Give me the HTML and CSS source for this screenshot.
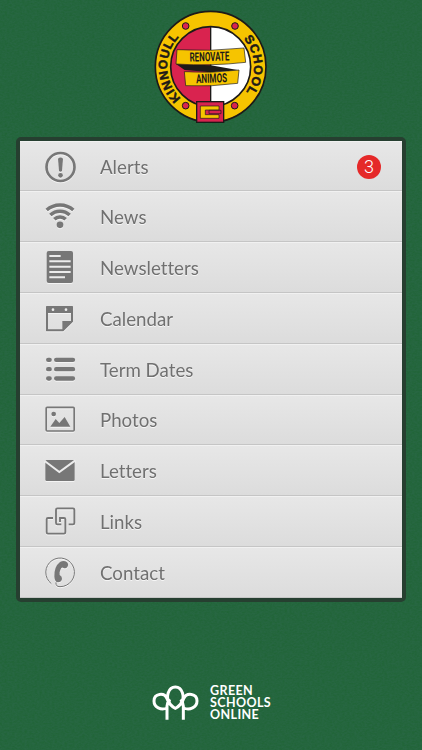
FILE: index.html
```html
<!DOCTYPE html>
<html lang="en">
<head>
  <meta charset="UTF-8" />
  <meta name="viewport" content="width=device-width, initial-scale=1" />
  <title>Kinnoull School</title>
  <link rel="stylesheet" href="styles.css">
</head>
<body>

<svg class="texture" aria-hidden="true">
  <filter id="grain">
    <feTurbulence type="fractalNoise" baseFrequency="0.4 0.6" numOctaves="2" seed="4" />
    <feColorMatrix values="0 0 0 0 0  0 0 0 0 0.1  0 0 0 0 0  0.9 0 0 0 -0.28" />
  </filter>
  <rect width="100%" height="100%" filter="url(#grain)" />
</svg>

<header>
  <svg class="crest" viewBox="0 0 366 366" role="img" aria-label="Kinnoull School">
    <defs>
      <path id="arc-left" d="M 93 280 A 130 130 0 0 1 93 90" />
      <path id="arc-right" d="M 281 101 A 130 130 0 0 1 286 264" />
    </defs>
    <circle cx="182" cy="185" r="166" fill="#f6c400" stroke="#1d1a18" stroke-width="5" />
    <circle cx="182" cy="185" r="120" fill="#fff" />
    <path d="M182 65 A120 120 0 0 0 182 305 Z" fill="#d9234f" />
    <circle cx="182" cy="185" r="120" fill="none" stroke="#1d1a18" stroke-width="5" />
    <path d="M182 65 V305" stroke="#1d1a18" stroke-width="4" />
    <g fill="#d9234f" stroke="#1d1a18" stroke-width="3">
      <circle cx="107" cy="63" r="10" />
      <circle cx="255" cy="63" r="10" />
      <circle cx="107" cy="302" r="10" />
      <circle cx="254" cy="302" r="10" />
    </g>
    <path d="M78 177 L182 181 L267 196 L182 202 L104 195 Z" fill="#1d1a18" />
    <g fill="#f6c400" stroke="#1d1a18" stroke-width="2">
      <path d="M81 134 Q182 140 282 129 L287 172 Q182 184 78 177 Z" />
      <path d="M103 200 Q182 206 267 195 L263 235 Q182 246 107 242 Z" />
    </g>
    <g class="ribbon-text">
      <text x="119" y="168" textLength="119" lengthAdjust="spacingAndGlyphs" transform="rotate(-1.5 180 155)">RENOVATE</text>
      <text x="138" y="233" textLength="93" lengthAdjust="spacingAndGlyphs" transform="rotate(-2 184 220)">ANIMOS</text>
    </g>
    <g class="ring-text">
      <text textLength="204"><textPath href="#arc-left">KINNOULL</textPath></text>
      <text textLength="172"><textPath href="#arc-right">SCHOOL</textPath></text>
    </g>
    <rect x="140" y="290" width="81" height="62" fill="#d9234f" stroke="#1d1a18" stroke-width="4" />
    <path d="M151 303 H207 V315 H166 V329 H207 V340 H151 Z" fill="#f6c400" stroke="#1d1a18" stroke-width="2" />
    <path d="M177 316 H213 V326 H177 Z" fill="#d9234f" stroke="#1d1a18" stroke-width="2" />
  </svg>
</header>

<main>
  <nav class="menu">
    <a class="item" href="#">
      <svg class="icon" viewBox="0 0 108 108">
        <circle class="line" cx="55.5" cy="54" r="42" stroke-width="8" />
        <path d="M48 29 Q55.5 22 63 29 L60 66 Q55.5 71 51 66 Z" />
        <circle cx="55.5" cy="79" r="7" />
      </svg>
      <span>Alerts</span>
      <b class="badge">3</b>
    </a>
    <a class="item" href="#">
      <svg class="icon" viewBox="0 0 108 108">
        <circle cx="54" cy="77.5" r="10" />
        <path class="line" stroke-width="10.5" d="M14 33 A60 60 0 0 1 94 33 M25 48 A42 42 0 0 1 83 48 M37 61 A24 24 0 0 1 71 61" />
      </svg>
      <span>News</span>
    </a>
    <a class="item" href="#">
      <svg class="icon" viewBox="0 0 108 108">
        <rect x="14" y="3" width="79" height="96" rx="6" />
        <path class="cut" d="M22 18 H56 M22 34 H86 M22 50 H86 M22 66 H86 M22 82 H69" />
      </svg>
      <span>Newsletters</span>
    </a>
    <a class="item" href="#">
      <svg class="icon" viewBox="0 0 108 108">
        <path fill-rule="evenodd" d="M14 15 H91 Q93 15 93 17 V62 L64 91 H14 Q12 91 12 89 V17 Q12 15 14 15 Z M18 36 V85 H61 V60 H87 V36 Z" />
        <circle class="hole" cx="33" cy="26" r="4" />
        <circle class="hole" cx="72" cy="26" r="4" />
      </svg>
      <span>Calendar</span>
    </a>
    <a class="item" href="#">
      <svg class="icon" viewBox="0 0 108 108">
        <path class="line round" stroke-width="13" d="M18.5 23.5 H23 M42.5 23.5 H93 M18.5 51.5 H23 M42.5 51.5 H93 M18.5 79.5 H23 M42.5 79.5 H93" />
      </svg>
      <span>Term Dates</span>
    </a>
    <a class="item" href="#">
      <svg class="icon" viewBox="0 0 108 108">
        <rect class="line" x="12.5" y="16" width="84" height="71" rx="3" stroke-width="5" />
        <circle cx="35" cy="36" r="7" />
        <path d="M25 74 L41 51 L52 63 L68 45 L85 74 Z" />
      </svg>
      <span>Photos</span>
    </a>
    <a class="item" href="#">
      <svg class="icon" viewBox="0 0 108 108">
        <rect x="10" y="21" width="88" height="63" rx="4" />
        <path class="cut" d="M8 24 L52 57 L100 22" />
      </svg>
      <span>Letters</span>
    </a>
    <a class="item" href="#">
      <svg class="icon" viewBox="0 0 108 108">
        <path class="line" stroke-width="5.5" d="M80 61 H93 Q97 61 97 57 V17 Q97 13 93 13 H46 Q42 13 42 17 V57 Q42 61 46 61 H58 M33 42 H18 Q14 42 14 46 V85 Q14 89 18 89 H66 Q70 89 70 85 V46 Q70 42 66 42 H54 V54" />
      </svg>
      <span>Links</span>
    </a>
    <a class="item" href="#">
      <svg class="icon" viewBox="0 0 108 108">
        <path class="line" stroke-width="3" d="M28 86 A43 43 0 1 1 54 95 Q40 95 42 82" />
        <path d="M54 21 Q66 15 75 22 Q81 28 76 36 Q71 43 63 38 Q58 36 56 43 Q51 52 53 60 Q61 64 60 72 Q58 82 48 82 Q38 81 37 65 Q36 35 54 21 Z" />
      </svg>
      <span>Contact</span>
    </a>
  </nav>
</main>

<footer>
  <svg class="trees" viewBox="0 0 144 114">
    <path d="M45 107 V66 Q45 56 54 46 M94 107 V66 Q94 56 86 46 M45 72 C27 80 6 70 6 51 C6 28 37 24 45 44 C48 56 62 70 70 73 C78 70 92 56 95 44 C104 24 135 28 135 51 C135 70 113 80 95 72 M54 58 C39 40 49 9 70 9 C91 9 101 40 86 58" />
  </svg>
  <p>GREEN<br>SCHOOLS<br>ONLINE</p>
</footer>

</body>
</html>
```

FILE: styles.css
```css
* {
  box-sizing: border-box;
}
body {
  margin: 0;
  height: 750px;
  overflow: hidden;
  background: #276742;
  font-family: Lato, "Open Sans", sans-serif;
}
.texture {
  position: absolute;
  width: 100%;
  height: 750px;
  z-index: -1;
  opacity: 0.35;
}
header {
  height: 137px;
  padding-top: 5px;
}
.crest {
  display: block;
  width: 122px;
  height: 122px;
  margin: 0 auto;
}
.ribbon-text {
  font-family: Roboto, sans-serif;
  font-size: 38px;
  font-weight: bold;
  fill: #1d1a18;
}
.ring-text {
  font-family: "Liberation Sans", sans-serif;
  font-size: 37px;
  font-weight: bold;
  fill: #1d1a18;
  stroke: #1d1a18;
  stroke-width: 1.5px;
}
.menu {
  display: grid;
  grid-template-rows: 50px repeat(8, 1fr);
  width: 390px;
  height: 465px;
  margin-left: 16px;
  border: 4px solid #263f30;
  border-radius: 5px;
  background: #263f30;
}
.item {
  display: flex;
  align-items: center;
  padding: 0 21px 0 22px;
  border-top: 1px solid #f1f1f1;
  border-bottom: 1px solid #c5c5c5;
  background: linear-gradient(#e7e7e7, #dcdcdc);
  color: #707070;
  font-size: 20px;
  text-decoration: none;
  text-shadow: 0 1px 0 #f6f6f6;
}
.item span {
  margin-bottom: 1px;
  font-variant-ligatures: none;
  transform: scaleX(0.935);
  transform-origin: left;
}
.icon {
  width: 36px;
  height: 36px;
  margin: 1px 22px 0 0;
  fill: #777;
  filter: drop-shadow(0 1px 0 #f4f4f4);
}
.line {
  fill: none;
  stroke: #777;
}
.round {
  stroke-linecap: round;
}
.cut {
  fill: none;
  stroke: #ececec;
  stroke-width: 6;
}
.hole {
  fill: #ececec;
}
.badge {
  width: 24px;
  height: 24px;
  margin: 2px 0 0 auto;
  border-radius: 50%;
  background: #e52929;
  color: #fff;
  font: 300 18px/24px Roboto, sans-serif;
  text-align: center;
  text-shadow: none;
}
footer {
  display: flex;
  margin: 82px 0 0 152px;
}
.trees {
  width: 48px;
  height: 38px;
  fill: none;
  stroke: #fff;
  stroke-width: 9;
}
footer p {
  margin: 1px 0 0 10px;
  color: #fff;
  font-size: 12.5px;
  font-weight: bold;
  line-height: 12px;
  letter-spacing: 0.4px;
}
```
